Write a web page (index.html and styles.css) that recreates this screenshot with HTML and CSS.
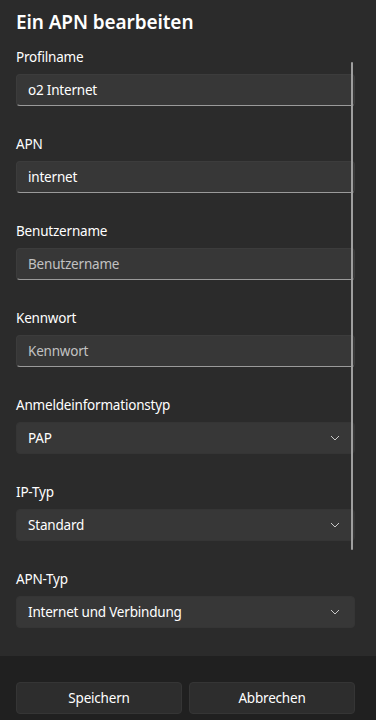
FILE: index.html
```html
<!DOCTYPE html>
<html lang="de">
<head>
    <meta charset="UTF-8">
    <meta name="viewport" content="width=device-width, initial-scale=1.0">
    <title>Ein APN bearbeiten</title>
    <link rel="stylesheet" href="styles.css">
</head>
<body>
    <div class="dialog">
        <div class="content">
            <h1>Ein APN bearbeiten</h1>

            <div class="field">
                <label>Profilname</label>
                <div class="textbox">o2 Internet</div>
            </div>
            <div class="field">
                <label>APN</label>
                <div class="textbox">internet</div>
            </div>
            <div class="field">
                <label>Benutzername</label>
                <div class="textbox placeholder">Benutzername</div>
            </div>
            <div class="field">
                <label>Kennwort</label>
                <div class="textbox placeholder">Kennwort</div>
            </div>
            <div class="field">
                <label>Anmeldeinformationstyp</label>
                <div class="combo">PAP
                    <svg class="chevron" width="10" height="6" viewBox="0 0 10 6"><path d="M1 1l4 4 4-4" fill="none" stroke="#c8c8c8" stroke-width="1"/></svg>
                </div>
            </div>
            <div class="field">
                <label>IP-Typ</label>
                <div class="combo">Standard
                    <svg class="chevron" width="10" height="6" viewBox="0 0 10 6"><path d="M1 1l4 4 4-4" fill="none" stroke="#c8c8c8" stroke-width="1"/></svg>
                </div>
            </div>
            <div class="field">
                <label>APN-Typ</label>
                <div class="combo">Internet und Verbindung
                    <svg class="chevron" width="10" height="6" viewBox="0 0 10 6"><path d="M1 1l4 4 4-4" fill="none" stroke="#c8c8c8" stroke-width="1"/></svg>
                </div>
            </div>

            <!-- overlay scrollbar -->
            <div class="scrollbar"></div>
        </div>

        <div class="footer">
            <button class="btn">Speichern</button>
            <button class="btn">Abbrechen</button>
        </div>
    </div>
</body>
</html>
```

FILE: styles.css
```css
body {
    font-family: "Noto Sans", "Open Sans", sans-serif;
    margin: 0;
    background-color: #2b2b2b;
    color: #ffffff;
    overflow: hidden;
}
.dialog {
    width: 376px;
    height: 720px;
    display: flex;
    flex-direction: column;
}
.content {
    position: relative;
    height: 656px;
    padding: 8px 21px 0 16px;
    box-sizing: border-box;
}
h1 {
    font-size: 19px;
    font-weight: 600;
    letter-spacing: -0.1px;
    line-height: 28px;
    margin: 0 0 11px;
}
.field {
    margin-bottom: 28px;
}
.field label {
    display: block;
    font-size: 13.5px;
    letter-spacing: -0.2px;
    line-height: 20px;
    margin-bottom: 7px;
}
.textbox,
.combo {
    height: 32px;
    box-sizing: border-box;
    background-color: #373737;
    border: 1px solid #3c3c3c;
    border-radius: 4px;
    padding: 0 10px 0 11px;
    display: flex;
    align-items: center;
    font-size: 13.5px;
    letter-spacing: -0.2px;
}
.textbox {
    border-bottom: 1px solid #9a9a9a;
}
.textbox.placeholder {
    color: #c2c2c2;
}
.combo {
    justify-content: space-between;
    padding-right: 14px;
    border-color: #353535;
}
.scrollbar {
    position: absolute;
    left: 351px;
    top: 62px;
    width: 2px;
    height: 488px;
    border-radius: 1px;
    background-color: #9e9e9e;
}
.footer {
    flex: 1;
    background-color: #202020;
    display: flex;
    gap: 7px;
    padding: 26px 21px 0 16px;
}
.btn {
    flex: 1;
    height: 32px;
    background-color: #2d2d2d;
    border: 1px solid #353535;
    border-radius: 4px;
    color: #ffffff;
    font-family: inherit;
    font-size: 13.5px;
    letter-spacing: -0.2px;
}
```
